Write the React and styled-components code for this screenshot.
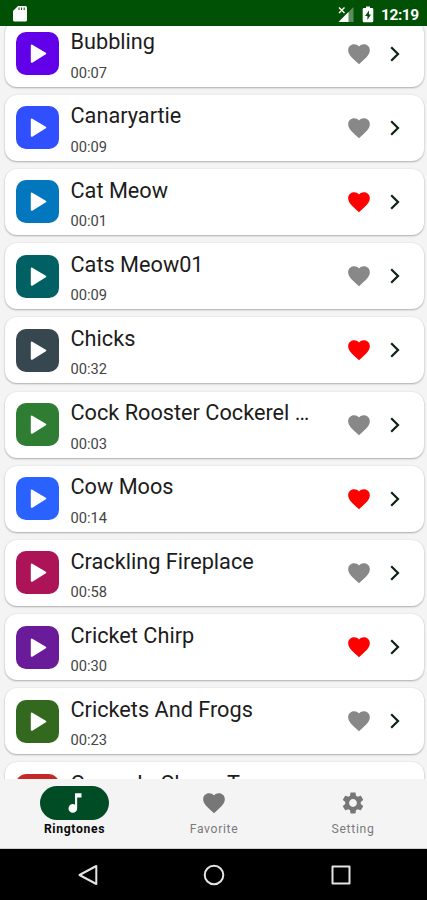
import React from "react";
import styled, { createGlobalStyle } from "styled-components";

const Global = createGlobalStyle`
  *, *::before, *::after { box-sizing: border-box; }
  body { margin: 0; background: #f4f4f4; font-family: Roboto, "Liberation Sans", sans-serif; }
`;

const Screen = styled.div`
  width: 427px;
  height: 900px;
  display: flex;
  flex-direction: column;
  overflow: hidden;
  background: #f4f4f4;
`;

const StatusBar = styled.header`
  flex: none;
  height: 26px;
  display: flex;
  align-items: center;
  padding: 2px 8px 0 13px;
  background: #005005;
  color: #fff;
`;

const StatusRight = styled.div`
  margin-left: auto;
  display: flex;
  align-items: center;
`;

const SignalIcon = styled.svg`
  width: 16px;
  height: 17px;
  margin-right: 8px;
`;

const BatteryIcon = styled.svg`
  width: 12px;
  height: 17px;
  margin-right: 7px;
`;

const Clock = styled.time`
  font-size: 15.5px;
  line-height: 20px;
  font-weight: 700;
  width: 38px;
  padding-top: 1px;
  letter-spacing: -0.45px;
`;

const List = styled.main`
  flex: 1;
  min-height: 0;
  overflow: hidden;
  padding: 0 3.5px 0 5px;
`;

const Tracks = styled.ul`
  list-style: none;
  margin: -5.4px 0 0;
  padding: 0;
  display: flex;
  flex-direction: column;
  gap: 8.2px;
`;

const Card = styled.li`
  flex: none;
  height: 66px;
  display: flex;
  align-items: center;
  padding: 0 16.5px 0 11px;
  border-radius: 12px;
  background: #fff;
  box-shadow: 0 1px 2px rgba(0, 0, 0, 0.28), 0 0 2px rgba(0, 0, 0, 0.08);
`;

const PlayButton = styled.button`
  flex: none;
  width: 43px;
  height: 43px;
  padding: 0;
  border: 0;
  border-radius: 10px;
  display: flex;
  background: ${(p) => p.$color};
`;

const TrackText = styled.div`
  width: 243px;
  height: 66px;
  margin-left: 11.5px;
  padding-top: 8.6px;
`;

const Title = styled.div`
  font-size: 21.7px;
  line-height: 25px;
  color: #1c1c1c;
  white-space: nowrap;
  overflow: hidden;
  text-overflow: ellipsis;
`;

const Duration = styled.div`
  margin-top: 9.4px;
  font-size: 14.7px;
  line-height: 18px;
  color: #444;
`;

const Actions = styled.div`
  margin-left: auto;
  display: flex;
  align-items: center;
  gap: 11.5px;
`;

const Heart = styled.svg`
  width: 26px;
  height: 26px;
  fill: ${(p) => (p.$active ? "#ff0000" : "#888888")};
`;

const Chevron = styled.svg`
  width: 24px;
  height: 24px;
`;

const TabBar = styled.nav`
  flex: none;
  height: 70px;
  display: grid;
  grid-template-columns: 149px 130px 148px;
  background: #f4f4f4;
  border-bottom: 1px solid #cfcfcf;
`;

const Tab = styled.a`
  display: flex;
  flex-direction: column;
  align-items: center;
  padding-top: 7px;
  font-size: 12.2px;
  line-height: 18px;
  letter-spacing: 0.65px;
  font-weight: ${(p) => (p.$active ? 700 : 400)};
  color: ${(p) => (p.$active ? "#0a0a0a" : "#7b7b7b")};
`;

const Pill = styled.span`
  width: 69px;
  height: 34px;
  border-radius: 17px;
  display: flex;
  align-items: center;
  justify-content: center;
  background: ${(p) => (p.$active ? "#004d25" : "transparent")};
`;

const TabIcon = styled.svg`
  width: 26px;
  height: 26px;
  fill: ${(p) => (p.$active ? "#fff" : "#777")};
`;

const SystemBar = styled.footer`
  flex: none;
  height: 51px;
  display: grid;
  grid-template-columns: 25px 126px 126.5px 126px;
  justify-items: center;
  align-items: center;
  background: #000;
`;

const SystemIcon = styled.svg`
  width: 24px;
  height: 24px;
  fill: none;
  stroke: #e4e4e4;
  stroke-width: 2;
  stroke-linejoin: round;
`;

const HEART = "M12 21.35l-1.45-1.32C5.4 15.36 2 12.28 2 8.5 2 5.42 4.42 3 7.5 3c1.74 0 3.41.81 4.5 2.09C13.09 3.81 14.76 3 16.5 3 19.58 3 22 5.42 22 8.5c0 3.78-3.4 6.86-8.55 11.54L12 21.35z";
const NOTE = "M12 3v10.55c-.59-.34-1.27-.55-2-.55-2.21 0-4 1.79-4 4s1.79 4 4 4 4-1.79 4-4V7h4V3h-6z";
const GEAR = "M19.14 12.94c.04-.3.06-.61.06-.94 0-.32-.02-.64-.07-.94l2.03-1.58c.18-.14.23-.41.12-.61l-1.92-3.32c-.12-.22-.37-.29-.59-.22l-2.39.96c-.5-.38-1.03-.7-1.62-.94l-.36-2.54c-.04-.24-.24-.41-.48-.41h-3.84c-.24 0-.43.17-.47.41l-.36 2.54c-.59.24-1.13.57-1.62.94l-2.39-.96c-.22-.08-.47 0-.59.22L2.74 8.87c-.12.21-.08.47.12.61l2.03 1.58c-.05.3-.09.63-.09.94s.02.64.07.94l-2.03 1.58c-.18.14-.23.41-.12.61l1.92 3.32c.12.22.37.29.59.22l2.39-.96c.5.38 1.03.7 1.62.94l.36 2.54c.05.24.24.41.48.41h3.84c.24 0 .44-.17.47-.41l.36-2.54c.59-.24 1.13-.56 1.62-.94l2.39.96c.22.08.47 0 .59-.22l1.92-3.32c.12-.22.07-.47-.12-.61l-2.01-1.58zM12 15.6c-1.98 0-3.6-1.62-3.6-3.6s1.62-3.6 3.6-3.6 3.6 1.62 3.6 3.6-1.62 3.6-3.6 3.6z";

const tracks = [
  { title: "Bubbling", time: "00:07", color: "#6200ea" },
  { title: "Canaryartie", time: "00:09", color: "#304ffe" },
  { title: "Cat Meow", time: "00:01", color: "#0277bd", liked: true },
  { title: "Cats Meow01", time: "00:09", color: "#006064" },
  { title: "Chicks", time: "00:32", color: "#37474f", liked: true },
  { title: "Cock Rooster Cockerel Crow", time: "00:03", color: "#2e7d32" },
  { title: "Cow Moos", time: "00:14", color: "#2962ff", liked: true },
  { title: "Crackling Fireplace", time: "00:58", color: "#ad1457" },
  { title: "Cricket Chirp", time: "00:30", color: "#6a1b9a", liked: true },
  { title: "Crickets And Frogs", time: "00:23", color: "#33691e" },
  { title: "Crows In Closer Tree", time: "00:12", color: "#c62828" },
];

function Track({ title, time, color, liked }) {
  return (
    <Card>
      <PlayButton $color={color} aria-label={`Play ${title}`}>
        <svg width="43" height="43" viewBox="0 0 43 43">
          <path d="M15.8 13.5L29.3 21.5L15.8 29.8Z" fill="#fff" stroke="#fff" strokeWidth="2" strokeLinejoin="round" />
        </svg>
      </PlayButton>
      <TrackText>
        <Title>{title}</Title>
        <Duration>{time}</Duration>
      </TrackText>
      <Actions>
        <Heart $active={liked} viewBox="0 0 24 24"><path d={HEART} /></Heart>
        <Chevron viewBox="0 0 24 24">
          <path d="M8.2 5.3L15 12L8.2 18.7" fill="none" stroke="#0b2410" strokeWidth="2.2" />
        </Chevron>
      </Actions>
    </Card>
  );
}

export default function App() {
  return (
    <Screen>
      <Global />
      <StatusBar>
        <svg width="14" height="17" viewBox="0 0 14 17">
          <path d="M5 0H12.5Q14 0 14 1.5V14Q14 15.5 12.5 15.5H1.5Q0 15.5 0 14V5Z" fill="#fff" />
          <path d="M6 1.5V4M8.6 1.5V4M11.2 1.5V4" stroke="#005005" strokeWidth="1" />
        </svg>
        <StatusRight>
          <SignalIcon viewBox="0 0 16 17">
            <path d="M15.5 1V16H0.5Z" fill="#5c8d5f" />
            <path d="M10.5 6V16H0.5Z" fill="#fff" />
            <path d="M1 1.5L6.5 7M6.5 1.5L1 7" stroke="#fff" strokeWidth="1.4" />
          </SignalIcon>
          <BatteryIcon viewBox="0 0 12 17">
            <path d="M4 0.5H8V2H10Q11.3 2 11.3 3.3V15Q11.3 16.3 10 16.3H2Q0.7 16.3 0.7 15V3.3Q0.7 2 2 2H4Z" fill="#fff" />
            <path d="M7 4.5L3 10H5.4V14L9 8.5H7Z" fill="#005005" />
          </BatteryIcon>
          <Clock>12:19</Clock>
        </StatusRight>
      </StatusBar>
      <List>
        <Tracks>
          {tracks.map((t) => <Track key={t.title} {...t} />)}
        </Tracks>
      </List>
      <TabBar>
        <Tab $active>
          <Pill $active><TabIcon $active viewBox="0 0 24 24"><path d={NOTE} /></TabIcon></Pill>
          Ringtones
        </Tab>
        <Tab>
          <Pill><TabIcon viewBox="0 0 24 24"><path d={HEART} /></TabIcon></Pill>
          Favorite
        </Tab>
        <Tab>
          <Pill><TabIcon viewBox="0 0 24 24"><path d={GEAR} /></TabIcon></Pill>
          Setting
        </Tab>
      </TabBar>
      <SystemBar>
        <span />
        <SystemIcon viewBox="0 0 24 24"><path d="M20.3 3V21L3.5 12Z" /></SystemIcon>
        <SystemIcon viewBox="0 0 24 24"><circle cx="12" cy="12" r="9.3" /></SystemIcon>
        <SystemIcon viewBox="0 0 24 24"><rect x="3.5" y="3.5" width="17" height="17" /></SystemIcon>
      </SystemBar>
    </Screen>
  );
}
